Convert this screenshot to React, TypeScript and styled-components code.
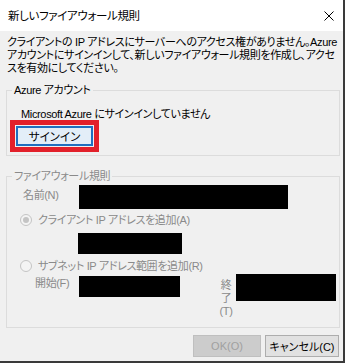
import React from "react";
import styled, { createGlobalStyle } from "styled-components";

const GlobalStyle = createGlobalStyle`
  html, body {
    margin: 0;
    padding: 0;
    background: #f0f0f0;
  }
  * {
    box-sizing: border-box;
  }
`;

const FONT = `"Liberation Sans", "Noto Sans CJK JP", sans-serif`;

const Window = styled.div`
  width: 345px;
  height: 363px;
  display: flex;
  flex-direction: column;
  background: #f0f0f0;
  border-right: 2px solid #3a3a3a;
  border-bottom: 2px solid #3a3a3a;
  font-family: ${FONT};
  font-size: 11px;
  letter-spacing: -0.35px;
  font-feature-settings: "palt";
  color: #000;
  overflow: hidden;
`;

const TitleBar = styled.div`
  height: 31px;
  flex: none;
  display: flex;
  align-items: center;
  justify-content: space-between;
  padding: 0 9px 0 8px;
  background: #fff;
`;

const Title = styled.div`
  font-size: 11.5px;
  line-height: 16px;
  color: #000;
`;

const Body = styled.div`
  flex: 1;
  display: flex;
  flex-direction: column;
  padding-top: 5px;
`;

const Description = styled.p`
  margin: 0;
  padding: 0 0 0 7px;
  line-height: 13px;
  white-space: nowrap;
`;

const Group = styled.fieldset<{ $top: number; $pb: number }>`
  margin: ${(p) => p.$top}px 3px 0 6px;
  padding: 0 0 ${(p) => p.$pb}px 0;
  border: 1px solid #dcdcdc;
  min-width: 0;
`;

const Legend = styled.legend<{ $disabled?: boolean }>`
  margin-left: 5px;
  padding: 0 2px;
  line-height: 16px;
  color: ${(p) => (p.$disabled ? "#8a8a8a" : "#000")};
`;

const Status = styled.div`
  margin-top: 10px;
  padding-left: 14px;
  line-height: 12px;
`;

const Highlight = styled.div`
  display: inline-flex;
  align-self: flex-start;
  margin: 0 0 0 3px;
  padding: 1px;
  border: 5px solid #e2202a;
`;

const SignInButton = styled.button`
  width: 77px;
  height: 20px;
  padding: 0;
  border: 2px solid #1f6fbf;
  background: #e3eef8;
  font-family: ${FONT};
  font-size: 11.5px;
  font-feature-settings: "palt";
  color: #000;
`;

const Column = styled.div`
  display: flex;
  flex-direction: column;
`;

const Row = styled.div<{ $top: number; $left: number }>`
  display: flex;
  align-items: flex-start;
  margin-top: ${(p) => p.$top}px;
  padding-left: ${(p) => p.$left}px;
`;

const Label = styled.span<{ $width: number; $top?: number; $gap?: number }>`
  width: ${(p) => p.$width}px;
  flex: none;
  margin-top: ${(p) => p.$top ?? 0}px;
  margin-left: ${(p) => p.$gap ?? 0}px;
  line-height: 13px;
  white-space: nowrap;
  color: #8a8a8a;
`;

const StackedLabel = styled(Label)`
  text-align: center;
`;

const Redacted = styled.div<{ $w: number; $h: number; $top?: number; $left?: number }>`
  width: ${(p) => p.$w}px;
  height: ${(p) => p.$h}px;
  flex: none;
  margin-top: ${(p) => p.$top ?? 0}px;
  margin-left: ${(p) => p.$left ?? 0}px;
  background: #000;
`;

const RadioRow = styled.label<{ $top: number }>`
  display: flex;
  align-items: center;
  gap: 6px;
  height: 14px;
  margin-top: ${(p) => p.$top}px;
  padding-left: 13px;
  color: #8a8a8a;
  line-height: 14px;
`;

const RadioCircle = styled.span<{ $checked?: boolean }>`
  width: 12px;
  height: 12px;
  flex: none;
  border: 1px solid #c4c4c4;
  border-radius: 50%;
  background: #f4f4f4;
  display: flex;
  align-items: center;
  justify-content: center;

  &::after {
    content: "";
    width: 6px;
    height: 6px;
    border-radius: 50%;
    background: ${(p) => (p.$checked ? "#c4c4c4" : "transparent")};
  }
`;

const Buttons = styled.div`
  display: flex;
  justify-content: flex-end;
  gap: 4px;
  margin-top: 7px;
  padding-right: 4px;
`;

const DialogButton = styled.button<{ $w: number }>`
  width: ${(p) => p.$w}px;
  height: 22px;
  padding: 0;
  border: 1px solid #adadad;
  background: #e1e1e1;
  font-family: ${FONT};
  font-size: 11px;
  font-feature-settings: "palt";
  color: #000;

  &:disabled {
    border-color: #bfbfbf;
    background: #cccccc;
    color: #a0a0a0;
  }
`;

const CloseIcon = () => (
  <svg width="10" height="10" viewBox="0 0 10 10">
    <path d="M0.5 0.5 L9.5 9.5 M9.5 0.5 L0.5 9.5" stroke="#000" strokeWidth="1" />
  </svg>
);

export default function App() {
  return (
    <>
      <GlobalStyle />
      <Window>
        <TitleBar>
          <Title>新しいファイアウォール規則</Title>
          <CloseIcon />
        </TitleBar>
        <Body>
          <Description>
            クライアントの IP アドレスにサーバーへのアクセス権がありません。Azure
            <br />
            アカウントにサインインして、新しいファイアウォール規則を作成し、アクセ
            <br />
            スを有効にしてください。
          </Description>

          <Group $top={7} $pb={3}>
            <Legend>Azure アカウント</Legend>
            <Column>
              <Status>Microsoft Azure にサインインしていません</Status>
              <Highlight>
                <SignInButton>サインイン</SignInButton>
              </Highlight>
            </Column>
          </Group>

          <Group $top={12} $pb={9} disabled>
            <Legend $disabled>ファイアウォール規則</Legend>
            <Row $top={1} $left={16}>
              <Label $width={56} $top={4}>名前(N)</Label>
              <Redacted $w={209} $h={24} />
            </Row>
            <RadioRow $top={4}>
              <RadioCircle $checked />
              クライアント IP アドレスを追加(A)
            </RadioRow>
            <Row $top={6} $left={71}>
              <Redacted $w={104} $h={21} />
            </Row>
            <RadioRow $top={5}>
              <RadioCircle />
              サブネット IP アドレス範囲を追加(R)
            </RadioRow>
            <Row $top={1} $left={28}>
              <Label $width={44} $top={3}>開始(F)</Label>
              <Redacted $w={101} $h={21} $top={2} />
              <StackedLabel $width={16} $top={5} $gap={38}>
                終<br />了<br />(T)
              </StackedLabel>
              <Redacted $w={100} $h={27} $left={2} />
            </Row>
          </Group>

          <Buttons>
            <DialogButton $w={68} disabled>
              OK(O)
            </DialogButton>
            <DialogButton $w={74}>キャンセル(C)</DialogButton>
          </Buttons>
        </Body>
      </Window>
    </>
  );
}
